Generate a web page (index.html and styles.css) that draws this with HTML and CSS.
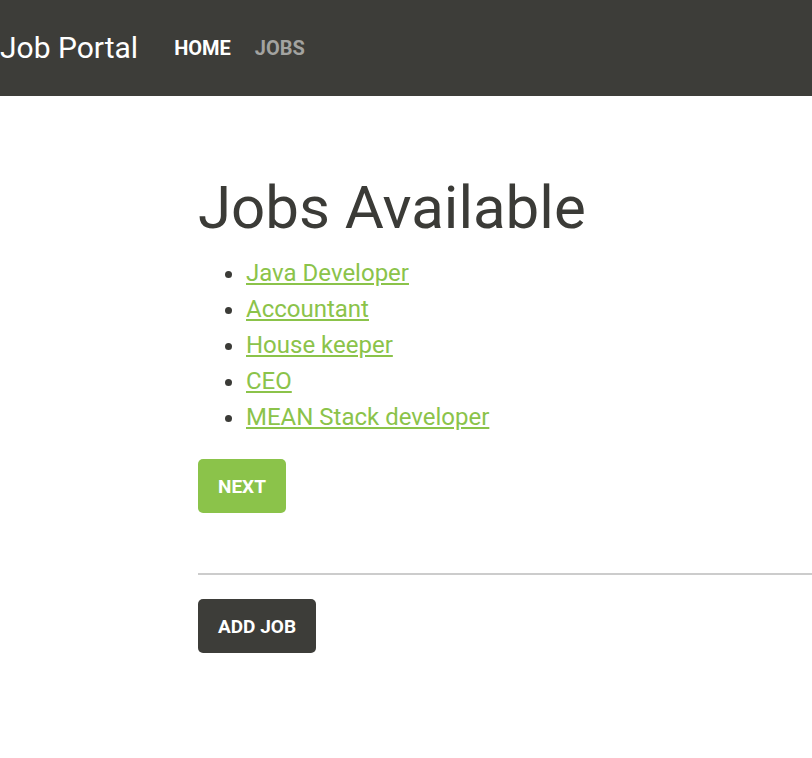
FILE: index.html
```html
<!DOCTYPE html>
<html>
<head>
<meta charset="utf-8">
<link rel="stylesheet" href="styles.css">
</head>
<body>
<nav class="navbar">
  <span class="brand">Job Portal</span>
  <a class="nav-link active" href="#">HOME</a>
  <a class="nav-link" href="#">JOBS</a>
</nav>
<main class="content">
  <h1 class="title">Jobs Available</h1>
  <ul class="job-list">
    <li><a href="#">Java Developer</a></li>
    <li><a href="#">Accountant</a></li>
    <li><a href="#">House keeper</a></li>
    <li><a href="#">CEO</a></li>
    <li><a href="#">MEAN Stack developer</a></li>
  </ul>
  <button class="btn btn-green">NEXT</button>
  <hr class="divider">
  <button class="btn btn-dark">ADD JOB</button>
</main>
</body>
</html>
```
FILE: styles.css
```css
html, body {
  margin: 0;
  padding: 0;
  background: #fff;
  font-family: Roboto, "Liberation Sans", sans-serif;
  overflow: hidden;
}
.navbar {
  height: 96px;
  background: #3d3d39;
  display: flex;
  align-items: center;
}
.brand {
  color: #fff;
  font-size: 30px;
  margin-right: 36px;
  line-height: 1;
}
.nav-link {
  color: #a3a3a0;
  text-decoration: none;
  font-weight: 700;
  font-size: 20px;
  margin-right: 24px;
}
.nav-link.active {
  color: #fff;
}
.content {
  padding-left: 198px;
  padding-top: 82px;
}
.title {
  margin: 0;
  font-weight: 400;
  font-size: 60px;
  line-height: 1;
  color: #3b3b37;
}
.job-list {
  margin: 17px 0 24px;
  padding-left: 48px;
  color: #3b3b37;
}
.job-list li {
  font-size: 24px;
  line-height: 36px;
}
.job-list a {
  color: #8bc34a;
}
.btn {
  border: none;
  border-radius: 5px;
  color: #fff;
  font-family: Roboto, "Liberation Sans", sans-serif;
  font-weight: 700;
  font-size: 19px;
  height: 54px;
  padding: 0 20px;
  display: block;
}
.btn-green {
  background: #8bc34a;
}
.btn-dark {
  background: #3d3d39;
}
.divider {
  margin: 60px 0 24px;
  border: none;
  border-top: 2px solid #ccc;
}
```
